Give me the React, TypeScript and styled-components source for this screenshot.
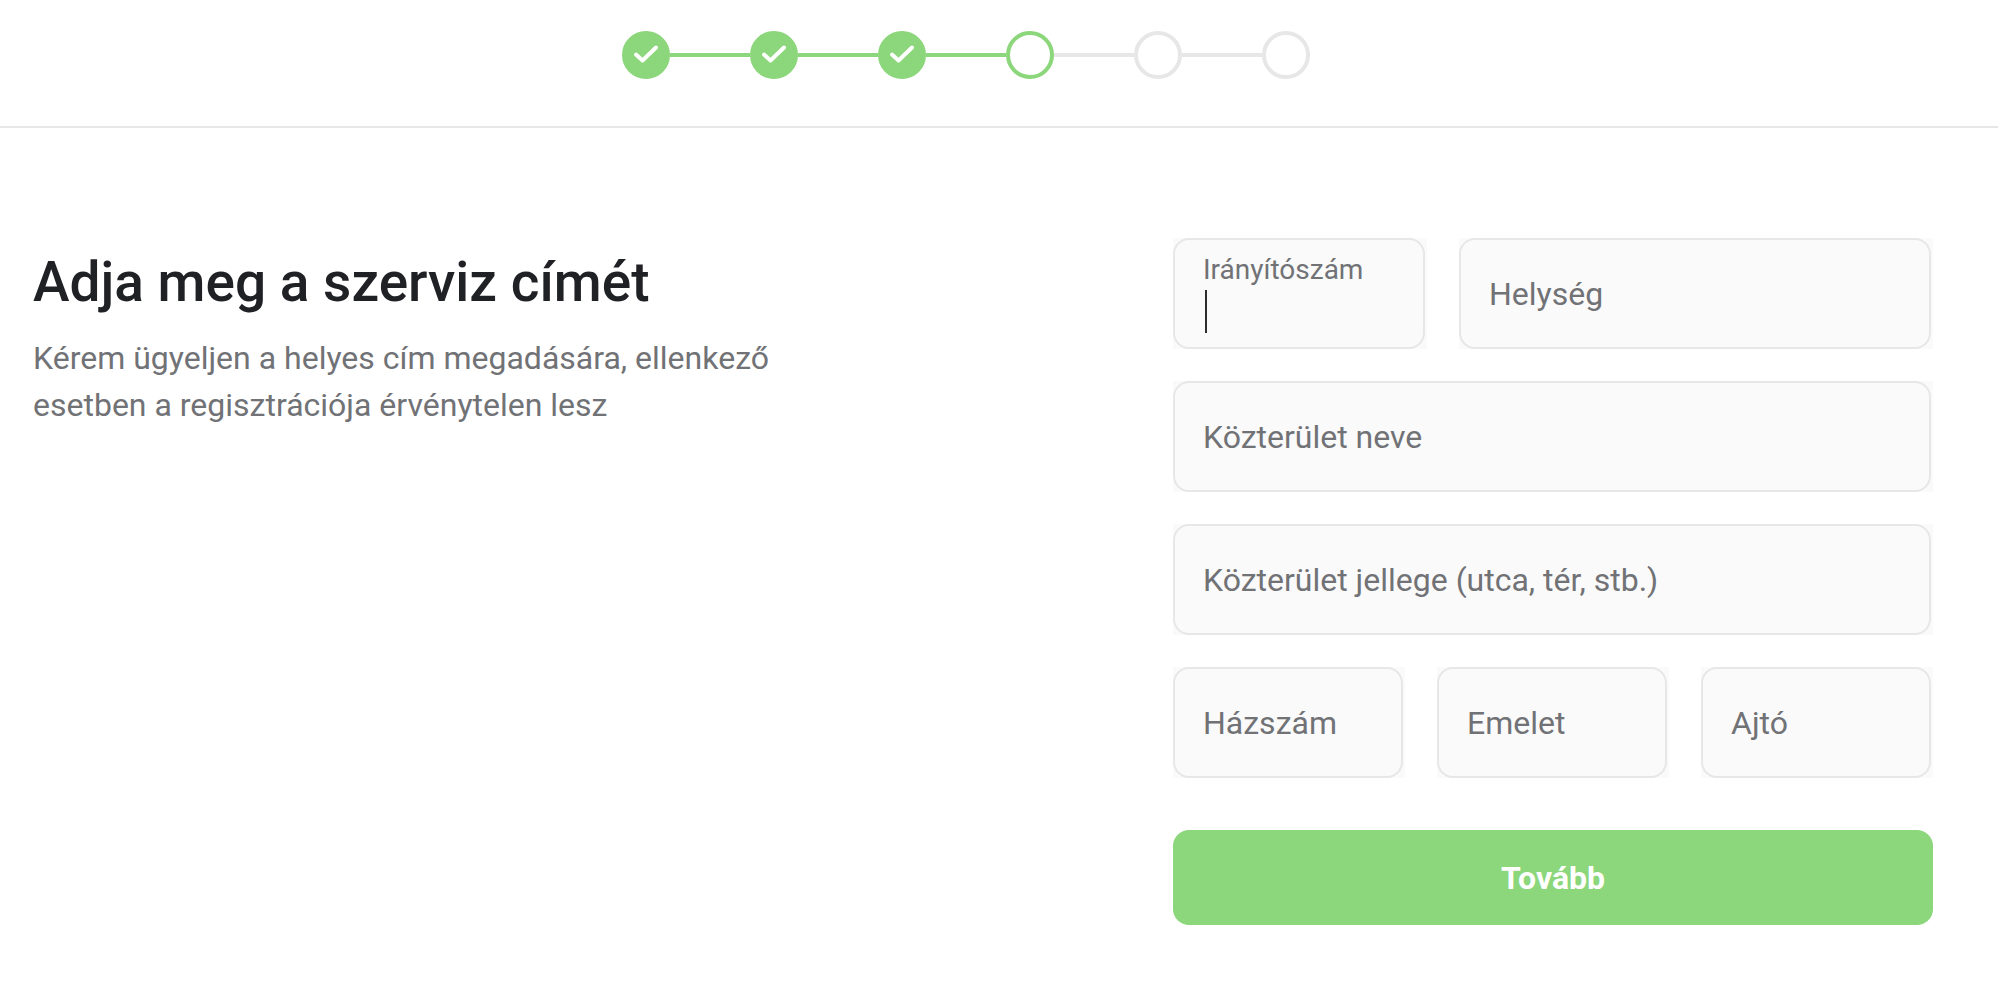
import React from "react";
import styled, { createGlobalStyle } from "styled-components";

const green = "#8cd67b";
const line = "#e7e7e7";
const fill = "#fafafa";
const muted = "#717276";

const GlobalStyle = createGlobalStyle`
  * {
    box-sizing: border-box;
  }
  body {
    margin: 0;
    background: #fff;
    color: #202125;
    font-family: Roboto, "Liberation Sans", sans-serif;
  }
`;

const Header = styled.header`
  padding: 31px 66px 47px 0;
  border-bottom: 2px solid ${line};
`;

const Stepper = styled.ol`
  display: flex;
  align-items: center;
  justify-content: center;
  margin: 0;
  padding: 0;
  list-style: none;
`;

const Step = styled.li<{ $reached: boolean }>`
  display: flex;
  align-items: center;

  &:not(:first-child)::before {
    content: "";
    width: 80px;
    height: 4px;
    background: ${(p) => (p.$reached ? green : line)};
  }
`;

const Dot = styled.span<{ $reached: boolean; $done: boolean }>`
  display: flex;
  width: 48px;
  height: 48px;
  border: 4px solid ${(p) => (p.$reached ? green : line)};
  border-radius: 50%;
  background: ${(p) => (p.$done ? green : "#fff")};

  svg {
    display: block;
    width: 40px;
    height: 40px;
  }
`;

const Main = styled.main`
  display: flex;
  align-items: flex-start;
  justify-content: space-between;
  gap: 64px;
  padding: 110px 65px 60px 33px;
`;

const Intro = styled.section`
  width: 40%;
  padding-top: 12px;
`;

const Title = styled.h1`
  margin: 0;
  font-size: 55px;
  font-weight: 500;
  line-height: 64px;
`;

const Lead = styled.p`
  margin: 21px 0 0;
  color: ${muted};
  font-size: 32px;
  line-height: 47px;
`;

const Form = styled.form`
  display: flex;
  flex-direction: column;
  gap: 32px;
  width: 40%;
`;

const Row = styled.div<{ $columns: string }>`
  display: grid;
  grid-template-columns: ${(p) => p.$columns};
  gap: 32px;
`;

const Field = styled.div`
  position: relative;
  height: 111px;
  padding-right: 2px;
  background: ${fill};
`;

const Input = styled.input<{ $drawnCaret: boolean }>`
  display: block;
  width: 100%;
  height: 100%;
  padding: 36px 28px 0;
  border: 2px solid ${line};
  border-radius: 16px;
  outline: none;
  background: ${fill};
  color: #2d2d2f;
  caret-color: ${(p) => (p.$drawnCaret ? "transparent" : "auto")};
  font: inherit;
  font-size: 32px;
`;

const Label = styled.label<{ $raised: boolean }>`
  position: absolute;
  top: ${(p) => (p.$raised ? 13 : 37)}px;
  left: 30px;
  color: ${muted};
  font-size: ${(p) => (p.$raised ? 28 : 32)}px;
  line-height: 38px;
  pointer-events: none;
`;

const Caret = styled.span`
  position: absolute;
  top: 52px;
  left: 32px;
  width: 2px;
  height: 43px;
  background: #2d2d2f;
`;

const Submit = styled.button`
  height: 95px;
  margin-top: 20px;
  border: 0;
  border-radius: 16px;
  background: ${green};
  color: #fff;
  font: inherit;
  font-size: 32px;
  font-weight: 700;
  cursor: pointer;
`;

const steps = 6;
const current = 3;

function Check() {
  return (
    <svg viewBox="0 0 40 40" fill="none" aria-hidden="true">
      <path
        d="M10 19.5L16.5 25.5L30 12.5"
        stroke="#fff"
        strokeWidth="4"
        strokeLinecap="round"
        strokeLinejoin="round"
      />
    </svg>
  );
}

function TextField({ id, label, active = false }: { id: string; label: string; active?: boolean }) {
  const [value, setValue] = React.useState("");
  const drawnCaret = active && value === "";
  return (
    <Field>
      <Input
        id={id}
        name={id}
        value={value}
        $drawnCaret={drawnCaret}
        onChange={(e) => setValue(e.target.value)}
      />
      <Label htmlFor={id} $raised={active || value !== ""}>
        {label}
      </Label>
      {drawnCaret && <Caret />}
    </Field>
  );
}

export default function App() {
  return (
    <>
      <GlobalStyle />
      <Header>
        <Stepper>
          {Array.from({ length: steps }, (_, i) => (
            <Step key={i} $reached={i <= current} aria-current={i === current ? "step" : undefined}>
              <Dot $reached={i <= current} $done={i < current}>
                {i < current && <Check />}
              </Dot>
            </Step>
          ))}
        </Stepper>
      </Header>
      <Main>
        <Intro>
          <Title>Adja meg a szerviz címét</Title>
          <Lead>Kérem ügyeljen a helyes cím megadására, ellenkező esetben a regisztrációja érvénytelen lesz</Lead>
        </Intro>
        <Form onSubmit={(e) => e.preventDefault()}>
          <Row $columns="254px 1fr">
            <TextField id="zip" label="Irányítószám" active />
            <TextField id="city" label="Helység" />
          </Row>
          <TextField id="street" label="Közterület neve" />
          <TextField id="streetType" label="Közterület jellege (utca, tér, stb.)" />
          <Row $columns="repeat(3, 1fr)">
            <TextField id="houseNumber" label="Házszám" />
            <TextField id="floor" label="Emelet" />
            <TextField id="door" label="Ajtó" />
          </Row>
          <Submit type="submit">Tovább</Submit>
        </Form>
      </Main>
    </>
  );
}
